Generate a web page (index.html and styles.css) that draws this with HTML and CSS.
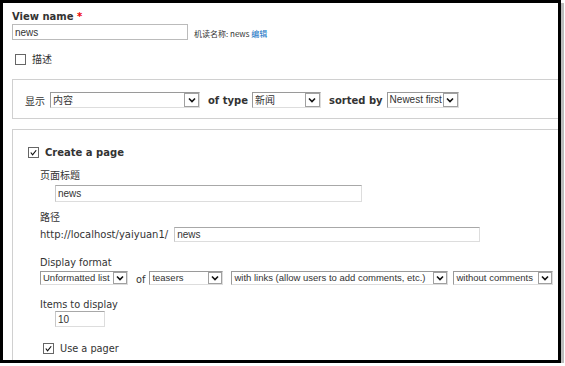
FILE: index.html
```html
<!DOCTYPE html>
<html lang="zh-CN">
<head>
    <meta charset="UTF-8">
    <title>View</title>
    <link rel="stylesheet" href="styles.css">
</head>
<body>
    <div class="frame">
        <div class="field">
            <label class="title">View name <span class="req">*</span></label>
            <div class="name-row">
                <input type="text" class="text name-in" value="news">
                <span class="machine">机读名称: news <a href="#">编辑</a></span>
            </div>
        </div>

        <div class="check-row desc">
            <span class="box"></span>
            <span class="zh">描述</span>
        </div>

        <fieldset class="set display-set">
            <span class="zh show">显示</span>
            <span class="sel sel-content"><span class="val zh">内容</span><span class="arrow"><svg viewBox="0 0 8 6"><path d="M1 1.5 L4 4.5 L7 1.5" /></svg></span></span>
            <b class="word">of type</b>
            <span class="sel sel-type"><span class="val zh">新闻</span><span class="arrow"><svg viewBox="0 0 8 6"><path d="M1 1.5 L4 4.5 L7 1.5" /></svg></span></span>
            <b class="word">sorted by</b>
            <span class="sel sel-sort"><span class="val">Newest first</span><span class="arrow"><svg viewBox="0 0 8 6"><path d="M1 1.5 L4 4.5 L7 1.5" /></svg></span></span>
        </fieldset>

        <fieldset class="set page-set">
            <div class="check-row page-check">
                <span class="box checked"><svg viewBox="0 0 10 10"><path d="M2 5 L4 7.5 L8 2.5" /></svg></span>
                <b class="legend">Create a page</b>
            </div>

            <div class="sub">
                <div class="lbl zh">页面标题</div>
                <input type="text" class="text title-in" value="news">

                <div class="lbl zh">路径</div>
                <div class="path-row">
                    <span>http://localhost/yaiyuan1/</span>
                    <input type="text" class="text path-in" value="news">
                </div>

                <div class="lbl">Display format</div>
                <div class="format-row">
                    <span class="sel small w-list"><span class="val">Unformatted list</span><span class="arrow"><svg viewBox="0 0 8 6"><path d="M1 1.5 L4 4.5 L7 1.5" /></svg></span></span>
                    <span class="of">of</span>
                    <span class="sel small w-teasers"><span class="val">teasers</span><span class="arrow"><svg viewBox="0 0 8 6"><path d="M1 1.5 L4 4.5 L7 1.5" /></svg></span></span>
                    <span class="sel small w-links"><span class="val">with links (allow users to add comments, etc.)</span><span class="arrow"><svg viewBox="0 0 8 6"><path d="M1 1.5 L4 4.5 L7 1.5" /></svg></span></span>
                    <span class="sel small w-comments"><span class="val">without comments</span><span class="arrow"><svg viewBox="0 0 8 6"><path d="M1 1.5 L4 4.5 L7 1.5" /></svg></span></span>
                </div>

                <div class="lbl items-lbl">Items to display</div>
                <input type="text" class="text items-in" value="10">

                <div class="check-row pager">
                    <span class="box checked"><svg viewBox="0 0 10 10"><path d="M2 5 L4 7.5 L8 2.5" /></svg></span>
                    <span>Use a pager</span>
                </div>
            </div>
        </fieldset>
    </div>
</body>
</html>
```

FILE: styles.css
```css
body {
    margin: 0;
    background-color: #fff;
    font-family: 'DejaVu Sans', 'Noto Sans CJK SC', sans-serif;
    font-size: 9px;
    color: #333;
}

.frame {
    width: 546px;
    height: 350px;
    border: 3px solid #000;
    box-shadow: 3px 3px 0 #bdbdbd;
    background-color: #fff;
    overflow: hidden;
    padding: 7px 0 0 9px;
}

.zh {
    font-family: 'Noto Sans CJK SC', sans-serif;
}

.title {
    display: block;
    font-weight: bold;
    font-size: 10px;
    line-height: 14px;
    color: #333;
}

.req {
    color: #e00;
}

.name-row {
    display: flex;
    align-items: center;
}

.text {
    font-family: 'Liberation Sans', Arial, sans-serif;
    font-size: 10px;
    color: #333;
    border: 1px solid #ddd;
    border-top-color: #a8a8a8;
    border-left-color: #c8c8c8;
    padding: 0 2px;
    margin: 0;
    box-sizing: border-box;
    background: #fff;
    outline: none;
}

.name-in {
    width: 176px;
    height: 16px;
    border-color: #bbb;
}

.machine {
    font-family: 'Noto Sans CJK SC', sans-serif;
    font-size: 8px;
    color: #333;
    margin-left: 6px;
    margin-top: 3px;
}

.machine a {
    color: #0a6fc2;
    text-decoration: none;
}

.check-row {
    display: flex;
    align-items: center;
    gap: 6px;
}

.box {
    width: 9px;
    height: 9px;
    border: 1px solid #666;
    background: #fff;
    display: flex;
    flex: none;
}

.box svg {
    width: 9px;
    height: 9px;
    fill: none;
    stroke: #111;
    stroke-width: 1.3;
}

.desc {
    margin: 12px 0 0 3px;
    font-size: 10px;
    line-height: 14px;
}

.set {
    margin: 0;
    border: 1px solid #d0d0d0;
    width: 600px;
    box-sizing: border-box;
}

.display-set {
    margin-top: 13px;
    height: 40px;
    padding: 2px 0 0 12px;
    display: flex;
    align-items: center;
}

.show {
    font-size: 10px;
    margin-right: 5px;
}

.word {
    font-size: 10px;
    margin: 1px 4px 0 8px;
    color: #333;
}

.sel {
    display: inline-flex;
    align-items: stretch;
    height: 16px;
    border: 1px solid #9a9a9a;
    border-bottom-color: #ddd;
    border-right-color: #ddd;
    box-sizing: border-box;
    background: #fff;
    font-family: 'Liberation Sans', Arial, sans-serif;
    font-size: 10px;
    color: #333;
}

.sel .val {
    flex: 1;
    padding-left: 2px;
    line-height: 14px;
    white-space: nowrap;
    overflow: hidden;
}

.sel .arrow {
    width: 15px;
    flex: none;
    border: 1px solid #a0a0a0;
    box-sizing: border-box;
    background: #fff;
    display: flex;
    align-items: center;
    justify-content: center;
}

.sel .arrow svg {
    width: 8px;
    height: 6px;
    fill: none;
    stroke: #111;
    stroke-width: 1.6;
}

.sel-content {
    width: 150px;
}

.sel-type {
    width: 69px;
}

.sel-sort {
    width: 72px;
}

.page-set {
    margin-top: 10px;
    height: 300px;
    padding: 17px 0 0 15px;
}

.legend {
    font-size: 10px;
    color: #333;
}

.sub {
    padding: 11px 0 0 12px;
}

.lbl {
    font-size: 9.75px;
    line-height: 12px;
    color: #333;
}

.lbl.zh {
    font-size: 10px;
}

.title-in {
    display: block;
    margin: 4px 0 9px 15px;
    width: 307px;
    height: 17px;
}

.path-row {
    display: flex;
    align-items: center;
    margin: 4px 0 15px;
    font-size: 10px;
}

.path-in {
    width: 306px;
    height: 15px;
    margin-left: 6px;
}

.format-row {
    display: flex;
    align-items: center;
    margin: 2px 0 14px;
}

.sel.small {
    height: 14px;
    font-size: 9.5px;
}

.sel.small .val {
    line-height: 12px;
}

.sel.small .arrow {
    width: 14px;
}

.w-list {
    width: 88px;
}

.of {
    margin: 2px 4px 0 8px;
    font-size: 9.75px;
}

.w-teasers {
    width: 74px;
}

.w-links {
    width: 217px;
    margin-left: 8px;
}

.w-comments {
    width: 100px;
    margin-left: 5px;
}

.items-in {
    display: block;
    width: 50px;
    height: 16px;
    margin: 0 0 0 15px;
}

.pager {
    margin: 16px 0 0 3px;
    font-size: 9.75px;
}
```
